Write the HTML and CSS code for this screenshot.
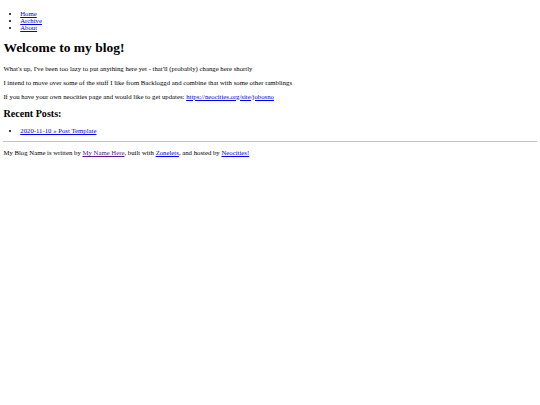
FILE: index.html
```html
<!DOCTYPE html>
<html>
<head>
<meta charset="utf-8">
<title>My Blog Name</title>
<link rel="stylesheet" href="styles.css">
</head>
<body class="page">
<nav>
<ul class="nav-list">
<li><a href="#">Home</a></li>
<li><a href="#">Archive</a></li>
<li><a href="#">About</a></li>
</ul>
</nav>
<main>
<h1 class="title">Welcome to my blog!</h1>
<p class="para">What's up, I've been too lazy to put anything here yet - that'll (probably) change here shortly</p>
<p class="para">I intend to move over some of the stuff I like from Backloggd and combine that with some other ramblings</p>
<p class="para">If you have your own neocities page and would like to get updates: <a href="#">https://neocities.org/site/jobosno</a></p>
<h2 class="subtitle">Recent Posts:</h2>
<ul class="post-list">
<li><a href="#">2020-11-10 » Post Template</a></li>
</ul>
</main>
<hr class="rule">
<footer class="footer">My Blog Name is written by <a class="visited" href="#">My Name Here</a>, built with <a href="#">Zonelets</a>, and hosted by <a href="#">Neocities!</a></footer>
</body>
</html>
```
FILE: styles.css
```css
html {
  background: #fff;
}
.page {
  margin: 3.375px;
  font-family: "Liberation Serif", "Times New Roman", serif;
  font-size: 6.75px;
  color: #000;
}
a {
  color: #0000ee;
}
a.visited {
  color: #551a8b;
}
.nav-list, .post-list {
  margin: 1em 0;
  padding-left: 16.875px;
}
.title {
  font-size: 2em;
  margin: 0.67em 0;
}
.subtitle {
  font-size: 1.5em;
  margin: 0.83em 0;
}
.para {
  margin: 1em 0;
}
.rule {
  margin: 0.5em 0;
  border: none;
  border-top: 1px solid #c4c4c4;
  height: 0;
}
.footer {
  margin: 1em 0;
}
```
